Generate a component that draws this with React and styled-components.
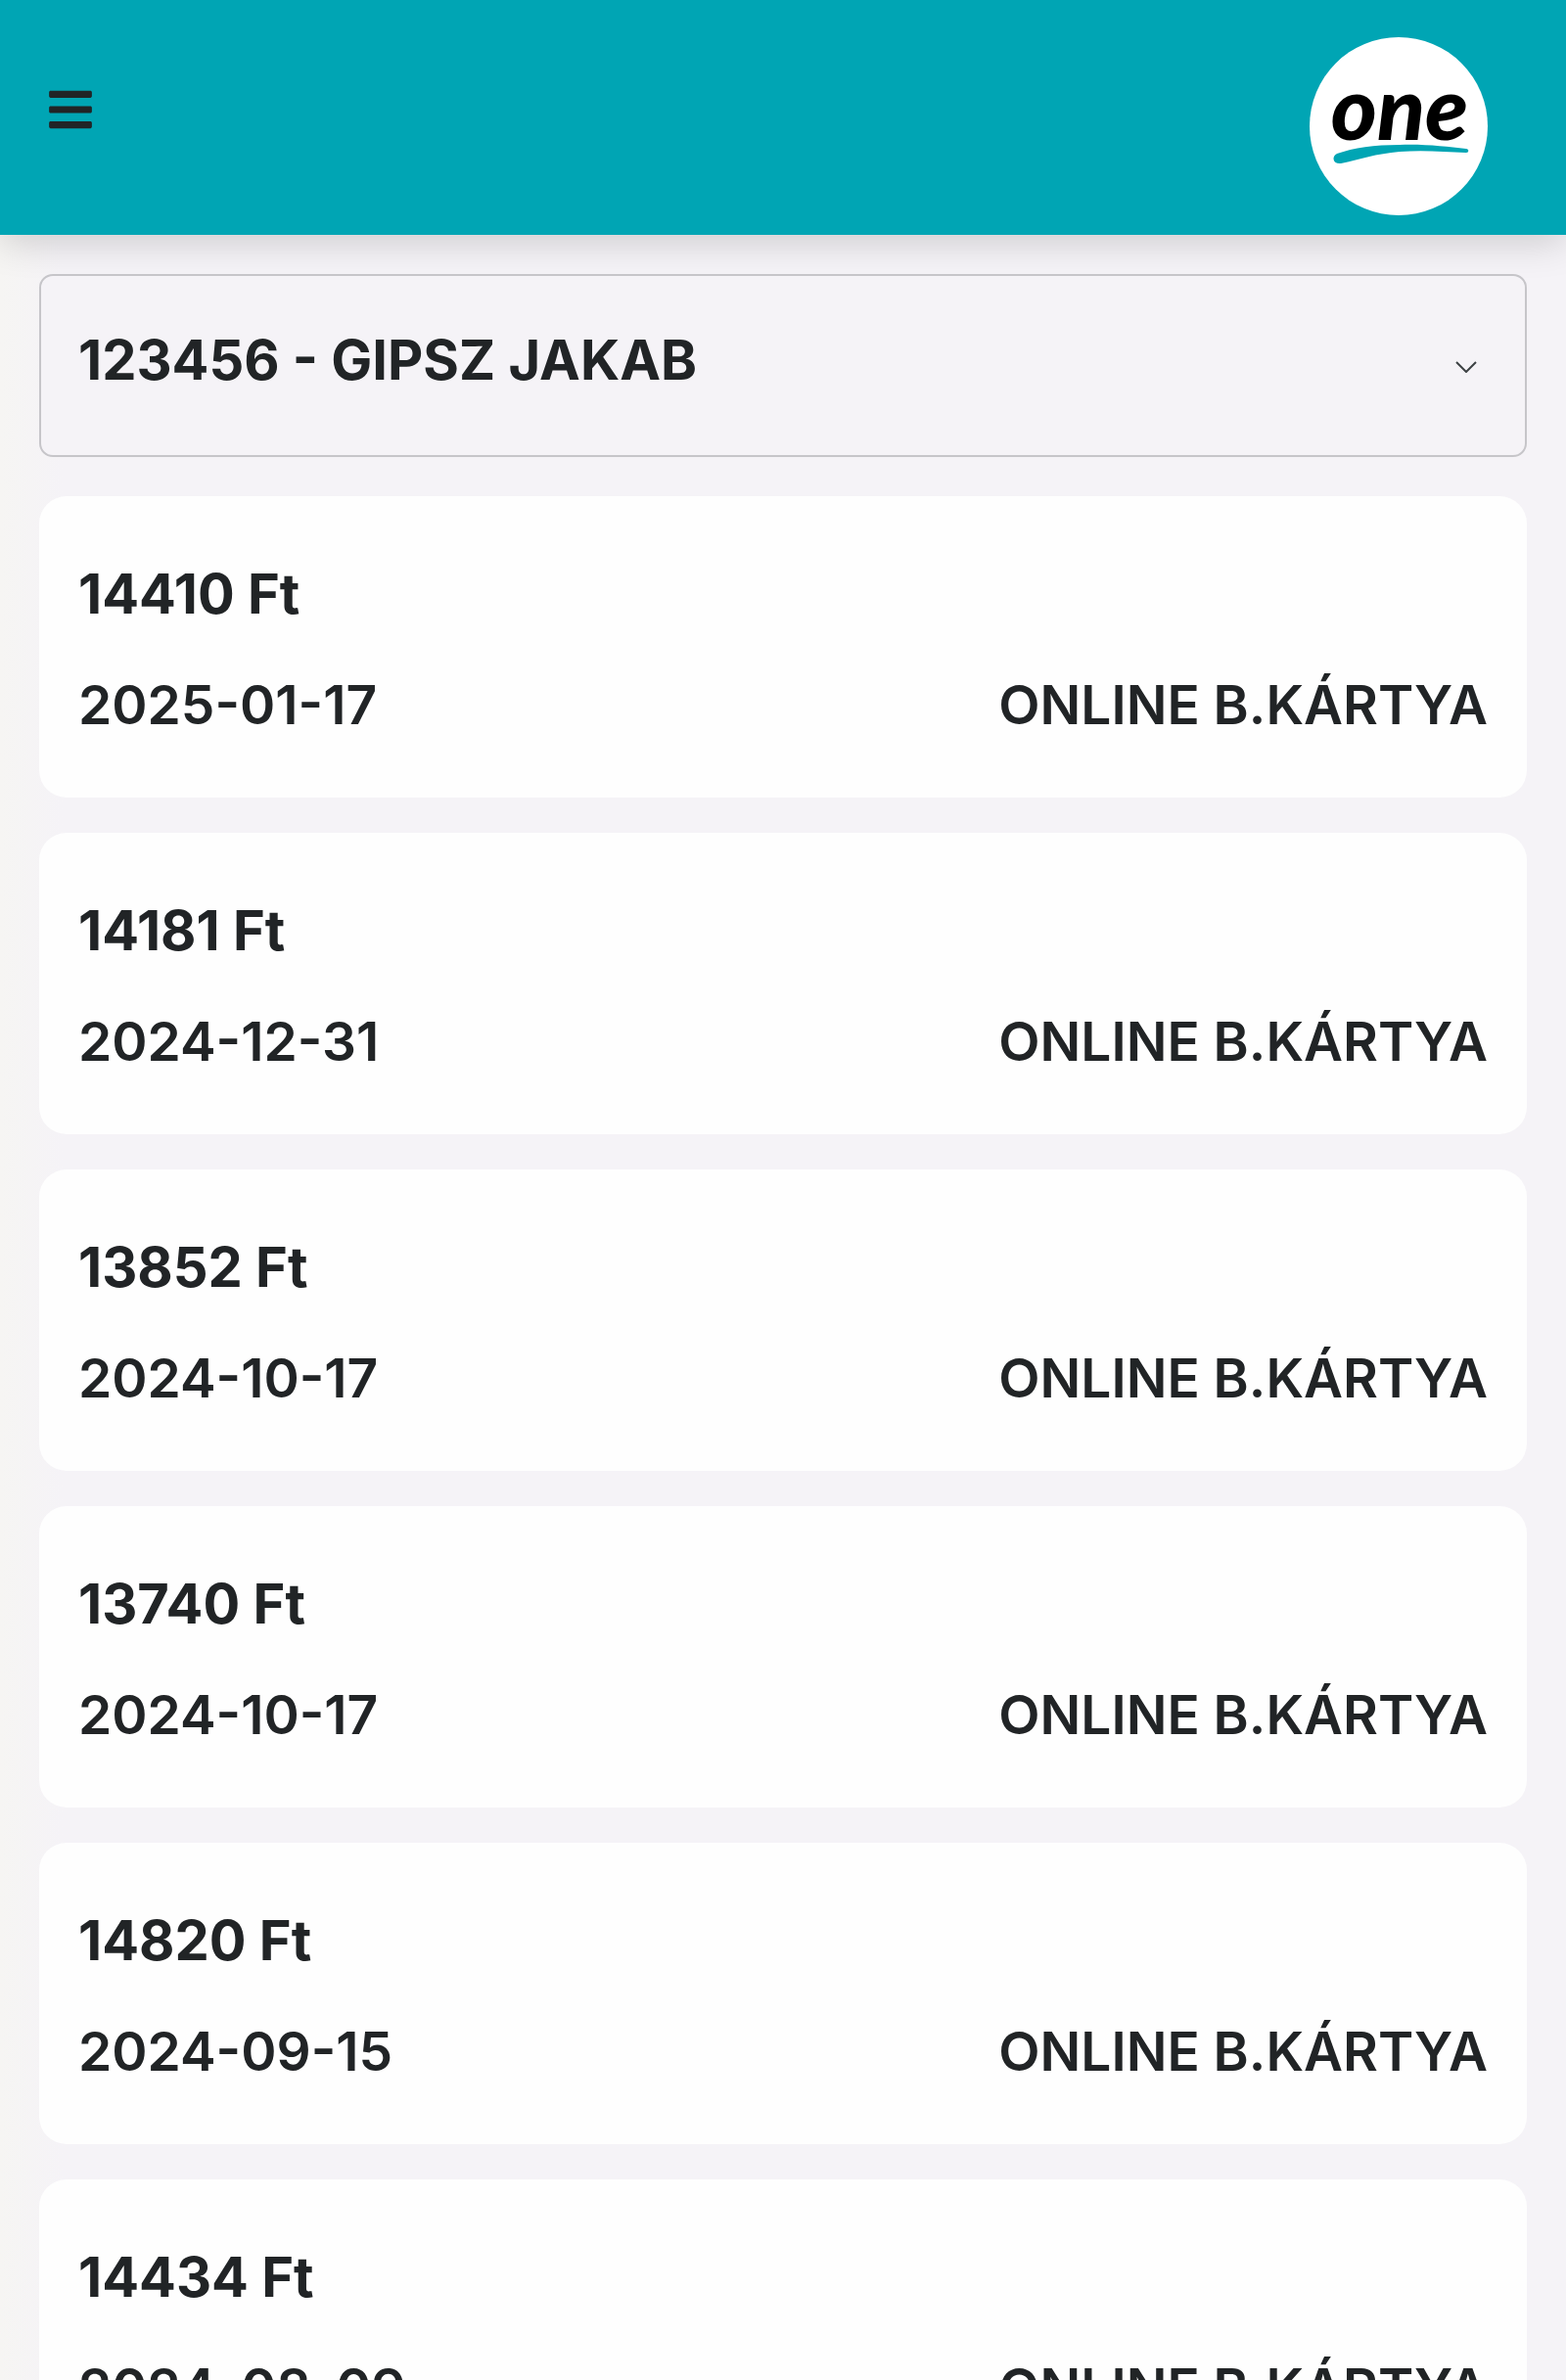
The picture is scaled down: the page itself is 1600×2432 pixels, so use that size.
import React, {useState} from 'react';
import styled, {createGlobalStyle} from 'styled-components';
import {FaBars} from 'react-icons/fa';

const accounts = [
    {id: '123456', name: 'GIPSZ JAKAB'}
];

const payments = [
    {id: 1, amount: 14410, date: '2025-01-17', method: 'ONLINE B.KÁRTYA'},
    {id: 2, amount: 14181, date: '2024-12-31', method: 'ONLINE B.KÁRTYA'},
    {id: 3, amount: 13852, date: '2024-10-17', method: 'ONLINE B.KÁRTYA'},
    {id: 4, amount: 13740, date: '2024-10-17', method: 'ONLINE B.KÁRTYA'},
    {id: 5, amount: 14820, date: '2024-09-15', method: 'ONLINE B.KÁRTYA'},
    {id: 6, amount: 14434, date: '2024-08-09', method: 'ONLINE B.KÁRTYA'}
];

const Logo = () => (
    <LogoSvg viewBox="0 0 182 182" role="img" aria-label="one">
        <circle cx="91" cy="91" r="91" fill="#fff"/>
        <LogoText x="92" y="105" textAnchor="middle">one</LogoText>
        <path
            d="M28 119 C45 113 66 110 92 110 C118 109 140 112 160 114 C163 114 163 118 160 118
               C138 117 115 115 92 117 C68 119 51 125 32 129 C24 130 22 122 28 119 Z"
            fill="#00a5b4"
        />
    </LogoSvg>
);

const AccountSelect = () => {
    const [account, setAccount] = useState(accounts[0].id);
    return (
        <SelectWrap>
            <Select
                aria-label="Ügyfél"
                value={account}
                onChange={(e) => setAccount(e.target.value)}
            >
                {accounts.map(({id, name}) => (
                    <option key={id} value={id}>{id} - {name}</option>
                ))}
            </Select>
            <Chevron viewBox="0 0 22 12" aria-hidden="true">
                <path d="M1 1 L11 11 L21 1" fill="none" stroke="#3c4144" strokeWidth="2"/>
            </Chevron>
        </SelectWrap>
    )
};

const PaymentCard = ({amount, date, method}) => (
    <Card>
        <Amount>{amount} Ft</Amount>
        <Details>
            <time dateTime={date}>{date}</time>
            <span>{method}</span>
        </Details>
    </Card>
);

const App = () => {
    return (
        <>
            <GlobalStyle/>
            <Header>
                <MenuButton type="button" aria-label="Menü">
                    <FaBars/>
                </MenuButton>
                <Logo/>
            </Header>
            <Main>
                <AccountSelect/>
                <List>
                    {payments.map(({id, ...payment}) => (
                        <PaymentCard key={id} {...payment}/>
                    ))}
                </List>
            </Main>
        </>
    )
};

export default App;

const GlobalStyle = createGlobalStyle`
    * {
        box-sizing: border-box;
    }
    body {
        margin: 0;
        background: linear-gradient(to right, #f6f5f3, #f5f3f7 64px);
        color: #212426;
        font-family: Inter, sans-serif;
        font-size: 56px;
        font-weight: 600;
        line-height: 84px;
    }
`;

const Header = styled.header`
    display: flex;
    justify-content: space-between;
    align-items: flex-start;
    padding: 38px 80px 20px 47px;
    background-color: #00a5b4;
    box-shadow: 0 8px 36px rgba(0, 0, 0, 0.16);
`;

const MenuButton = styled.button`
    display: flex;
    padding: 49px 0;
    border: none;
    background: none;
    color: #212426;
    font-size: 50px;
    cursor: pointer;
`;

const LogoSvg = styled.svg`
    display: block;
    width: 182px;
    height: 182px;
`;

const LogoText = styled.text`
    font-family: Lato, sans-serif;
    font-size: 90px;
    font-style: italic;
    font-weight: 900;
    fill: #000;
`;

const Main = styled.main`
    padding: 40px;
`;

const SelectWrap = styled.div`
    position: relative;
    margin-bottom: 40px;
`;

const Select = styled.select`
    display: block;
    width: 100%;
    padding: 44px 120px 55px 38px;
    border: 2px solid #c6c5c9;
    border-radius: 14px;
    background-color: #f5f3f7;
    color: inherit;
    font: inherit;
    font-weight: 650;
    appearance: none;
`;

const Chevron = styled.svg`
    position: absolute;
    top: 89px;
    right: 51px;
    width: 22px;
    height: 12px;
    pointer-events: none;
`;

const List = styled.ul`
    display: flex;
    flex-direction: column;
    gap: 36px;
    margin: 0;
    padding: 0;
    list-style: none;
`;

const Card = styled.li`
    display: flex;
    flex-direction: column;
    gap: 29px;
    padding: 58px 40px 53px;
    border-radius: 28px;
    background-color: #fefefe;
`;

const Amount = styled.strong`
    font-weight: 700;
`;

const Details = styled.div`
    display: flex;
    justify-content: space-between;
    font-size: 55px;
`;
